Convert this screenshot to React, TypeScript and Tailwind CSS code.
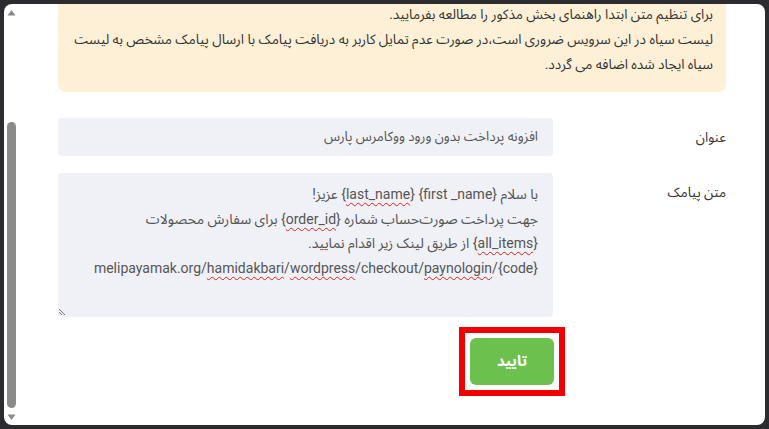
import React from "react";

const FONT = "font-['Roboto','Noto_Sans_Arabic','DejaVu_Sans',sans-serif]";

function Typo({ children }: { children: React.ReactNode }) {
  // words flagged by the browser spellchecker
  return (
    <span className="underline decoration-wavy decoration-[#e02020] decoration-1 underline-offset-[3px]">
      {children}
    </span>
  );
}

function ScrollBar() {
  return (
    <div className="w-[14px] shrink-0 flex flex-col items-center pt-[5px] pb-[4px]">
      <svg width="9" height="7" viewBox="0 0 9 7" className="shrink-0">
        <path d="M4.5 1 L8.5 6.5 L0.5 6.5 Z" fill="#8a8a8a" />
      </svg>
      <div className="flex-1 w-[9px] pt-[106px] pb-[6px] flex">
        <div className="flex-1 rounded-full bg-[#8b8b8b]" />
      </div>
      <svg width="9" height="7" viewBox="0 0 9 7" className="shrink-0">
        <path d="M0.5 0.5 L8.5 0.5 L4.5 6 Z" fill="#8a8a8a" />
      </svg>
    </div>
  );
}

function ResizeGrip() {
  return (
    <svg width="8" height="8" viewBox="0 0 8 8" className="block">
      <path d="M1 1 L7 7 M1 4 L4 7" stroke="#555" strokeWidth="0.8" />
    </svg>
  );
}

export default function App() {
  return (
    <div className={`w-[769px] h-[429px] bg-[#2b2b30] p-[4px] ${FONT}`}>
      <div className="h-full bg-white rounded-[8px] overflow-hidden flex">
        <ScrollBar />

        <div dir="rtl" className="flex-1 flex flex-col pr-[39px] pl-[40px]">
          <div className="-mt-[12px] pt-[10px] pb-[15px] pr-[13px] pl-[12px] rounded-[8px] bg-[#fdf0d7] text-[13.6px] leading-[25px] text-[#333]">
            <p>برای تنظیم متن ابتدا راهنمای بخش مذکور را مطالعه بفرمایید.</p>
            <p>
              لیست سیاه در این سرویس ضروری است،در صورت عدم تمایل کاربر به دریافت پیامک با ارسال پیامک مشخص به لیست
              سیاه ایجاد شده اضافه می گردد.
            </p>
          </div>

          <div className="mt-[26px] flex">
            <div className="w-[173px] shrink-0 flex items-center text-[13.5px] text-[#333]">عنوان</div>
            <div className="flex-1 h-[38px] rounded-[4px] bg-[#f0f1f6] flex items-center px-[15px] text-[13.3px] text-[#555]">
              افزونه پرداخت بدون ورود ووکامرس پارس
            </div>
          </div>

          <div className="mt-[17px] flex">
            <div className="w-[173px] shrink-0 pt-[9px] text-[13.5px] text-[#333]">متن پیامک</div>
            <div className="flex-1">
              <div className="h-[144px] rounded-[4px] bg-[#f0f1f6] flex flex-col pt-[9px] px-[15px] text-[14px] leading-[24.5px] text-[#555]">
                <p>
                  با سلام {"{first _name}"} {"{"}
                  <Typo>last_name</Typo>
                  {"}"} عزیز!
                </p>
                <p>
                  جهت پرداخت صورت‌حساب شماره {"{"}
                  <Typo>order_id</Typo>
                  {"}"} برای سفارش محصولات
                </p>
                <p>
                  {"{"}
                  <Typo>all_items</Typo>
                  {"}"} از طریق لینک زیر اقدام نمایید.
                </p>
                <p dir="ltr" className="text-right">
                  melipayamak.org/<Typo>hamidakbari</Typo>/<Typo>wordpress</Typo>/checkout/<Typo>paynologin</Typo>
                  /{"{code}"}
                </p>
                <div className="mt-auto -ml-[15px] self-end pb-[1px]">
                  <ResizeGrip />
                </div>
              </div>

              <div className="mt-[10px] -mr-[12px] flex">
                <div className="border-[6px] border-[#f00000] p-[5px]">
                  <button className="w-[84px] h-[47px] rounded-[6px] bg-[#6cc04e] text-white text-[15px] font-bold">
                    تایید
                  </button>
                </div>
              </div>
            </div>
          </div>
        </div>
      </div>
    </div>
  );
}
